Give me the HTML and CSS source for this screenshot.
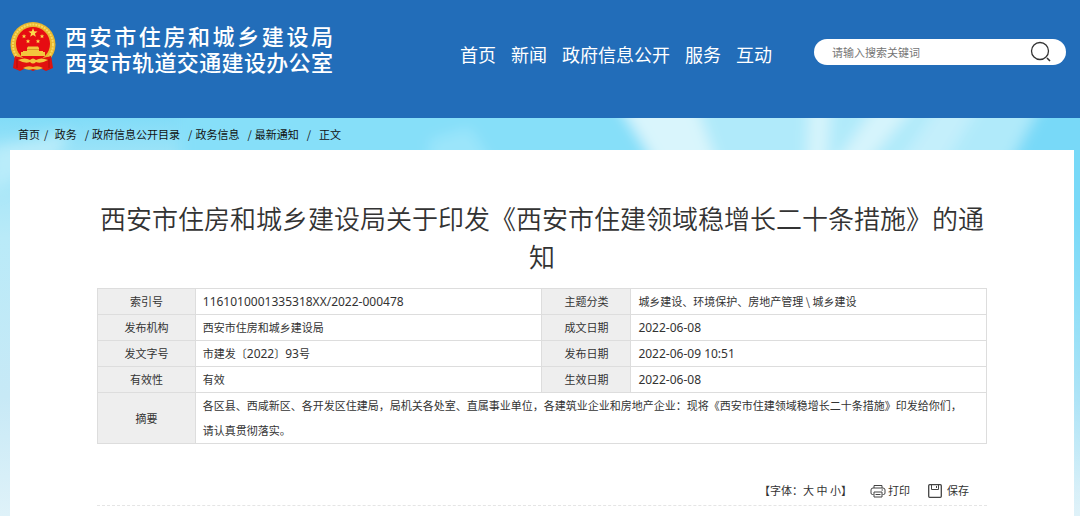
FILE: index.html
```html
<!DOCTYPE html>
<html lang="zh-CN">
<head>
    <meta charset="UTF-8">
    <title>西安市住房和城乡建设局</title>
    <meta name="viewport" content="width=device-width, initial-scale=1">
    <link rel="stylesheet" href="styles.css">
</head>
<body>
    <header class="header">
        <a class="logo" href="#">
            <svg class="logo-emblem" viewBox="0 0 46 50" aria-hidden="true">
                <path d="M5 33 L3 46 L10 49 L16 46 L23 49 L30 46 L36 49 L43 46 L41 33 Z" fill="#d8140f"/>
                <circle cx="23" cy="22.500" r="22.500" fill="#e9b62e"/>
                <circle cx="23" cy="22.500" r="20" fill="none" stroke="#f8da62" stroke-width="2" stroke-dasharray="2 1"/>
                <circle cx="23" cy="22" r="17" fill="#e60c12"/>
                <path d="M23 6 L24.2 9.3 L27.6 9.4 L24.9 11.5 L25.9 14.8 L23 12.9 L20.1 14.8 L21.1 11.5 L18.4 9.4 L21.8 9.3 Z" fill="#fbd84c"/>
                <path d="M14 12 l.6 1.5 1.7.1 -1.3 1 .4 1.6 -1.4-.9 -1.4.9 .4-1.6 -1.3-1 1.7-.1Z M18 17 l.6 1.5 1.7.1 -1.3 1 .4 1.6 -1.4-.9 -1.4.9 .4-1.6 -1.3-1 1.7-.1Z M28 17 l.6 1.5 1.7.1 -1.3 1 .4 1.6 -1.4-.9 -1.4.9 .4-1.6 -1.3-1 1.7-.1Z M32 12 l.6 1.5 1.7.1 -1.3 1 .4 1.6 -1.4-.9 -1.4.9 .4-1.6 -1.3-1 1.7-.1Z" fill="#fbd84c"/>
                <path d="M17 26 L18 24.5 H28 L29 26 V29 H33 V30 H35 V34 H11 V30 H13 V29 H17 Z" fill="#f3c63d"/>
                <path d="M17 27.5 H29" stroke="#d79b22" stroke-width="1"/>
                <path d="M5 34 Q23 40 41 34 L41 46 L36 48 L30 45 L23 48 L16 45 L10 48 L5 46 Z" fill="#e1120f"/>
                <path d="M8 38 Q15 35 20 38 Q23 35 26 38 Q31 35 38 38 Q31 42 26 40 Q23 43 20 40 Q15 42 8 38 Z" fill="#f3c63d"/>
                <path d="M13 46 Q18 43 23 45 Q28 43 33 46 Q28 49 23 47 Q18 49 13 46 Z" fill="#f0b934"/>
                <path d="M7 37 V46 M39 37 V46" stroke="#a90e0c" stroke-width="1"/>
            </svg>
            <span class="logo-name">西安市住房和城乡建设局<br>西安市轨道交通建设办公室</span>
        </a>
        <nav class="nav">
            <a href="#">首页</a>
            <a href="#">新闻</a>
            <a href="#">政府信息公开</a>
            <a href="#">服务</a>
            <a href="#">互动</a>
        </nav>
        <form class="search">
            <input class="search-input" type="text" placeholder="请输入搜索关键词" aria-label="请输入搜索关键词">
            <button class="search-btn" type="button" aria-label="搜索">
                <svg width="22" height="22" viewBox="0 0 22 22" fill="none" stroke="#333" aria-hidden="true">
                    <circle cx="10" cy="10" r="8.500" stroke-width="1.300"/>
                    <path d="M17 17 L20 20" stroke-width="1.600"/>
                </svg>
            </button>
        </form>
    </header>

    <main class="main">
        <svg class="sky" viewBox="0 0 1080 398" preserveAspectRatio="none" aria-hidden="true">
            <defs>
                <linearGradient id="skyFill" x1="0" y1="0" x2="0" y2="1">
                    <stop offset="0" stop-color="#82dcf8"/>
                    <stop offset=".1" stop-color="#9fe4f8"/>
                    <stop offset=".3" stop-color="#b9eaf8"/>
                    <stop offset=".7" stop-color="#c7e9f6"/>
                    <stop offset="1" stop-color="#dff2f9"/>
                </linearGradient>
                <linearGradient id="skyEdge" x1="0" y1="0" x2="0" y2="1">
                    <stop offset="0" stop-color="#78d9f8"/>
                    <stop offset=".3" stop-color="#78d9f8"/>
                    <stop offset="1" stop-color="#78d9f8" stop-opacity="0"/>
                </linearGradient>
                <filter id="soft" x="-10%" y="-20%" width="120%" height="140%"><feGaussianBlur stdDeviation="7"/></filter>
            </defs>
            <rect width="1080" height="398" fill="url(#skyFill)"/>
            <g filter="url(#soft)">
                <path d="M180 -30 H620 L675 60 H180 Z" fill="#86dff9"/>
                <path d="M430 22 L470 10 L500 60 H430 Z" fill="#9be5fa"/>
                <path d="M615 -30 H1050 L1000 60 H660 Z" fill="#b0eafa"/>
                <path d="M608 -30 H690 L722 60 H665 Z" fill="#d9f5fc"/>
                <path d="M810 -30 H832 L826 60 H806 Z" fill="#d6f4fc"/>
                <path d="M888 -30 H930 L855 60 H825 Z" fill="#d6f4fc"/>
                <path d="M950 -30 H990 L935 60 H890 Z" fill="#c4effb"/>
                <path d="M1052 -30 H1110 V380 H1070 L1062 70 L1002 60 Z" fill="url(#skyEdge)"/>
                <path d="M-10 30 L70 15 L60 35 L-10 75 Z" fill="#b9ecfa"/>
            </g>
        </svg>
        <div class="crumbs">
            <a href="#">首页</a><span class="sep">/</span>
            <a href="#">政务</a><span class="sep sep-left">/</span><a href="#">政府信息公开目录</a><span class="sep sep-left">/</span><a href="#">政务信息</a><span class="sep sep-left">/</span><a href="#">最新通知</a><span class="sep sep-both">/</span><span>正文</span>
        </div>

        <article class="panel">
            <h1 class="title">西安市住房和城乡建设局关于印发《西安市住建领域稳增长二十条措施》的通知</h1>
            <table class="info">
                <colgroup>
                    <col class="col-label">
                    <col class="col-value">
                    <col class="col-label2">
                    <col>
                </colgroup>
                <tr>
                    <th scope="row">索引号</th>
                    <td class="num">1161010001335318XX/2022-000478</td>
                    <th scope="row">主题分类</th>
                    <td>城乡建设、环境保护、房地产管理 \ 城乡建设</td>
                </tr>
                <tr>
                    <th scope="row">发布机构</th>
                    <td>西安市住房和城乡建设局</td>
                    <th scope="row">成文日期</th>
                    <td class="num">2022-06-08</td>
                </tr>
                <tr>
                    <th scope="row">发文字号</th>
                    <td>市建发〔<span class="num">2022</span>〕<span class="num">93</span>号</td>
                    <th scope="row">发布日期</th>
                    <td class="num">2022-06-09 10:51</td>
                </tr>
                <tr>
                    <th scope="row">有效性</th>
                    <td>有效</td>
                    <th scope="row">生效日期</th>
                    <td class="num">2022-06-08</td>
                </tr>
                <tr>
                    <th scope="row">摘要</th>
                    <td class="summary" colspan="3">各区县、西咸新区、各开发区住建局，局机关各处室、直属事业单位，各建筑业企业和房地产企业：现将《西安市住建领域稳增长二十条措施》印发给你们，请认真贯彻落实。</td>
                </tr>
            </table>

            <div class="tools">
                <span class="font-size">【字体：<button type="button">大</button> <button type="button">中</button> <button type="button">小</button>】</span>
                <button class="tool" type="button">
                    <svg width="16" height="14" viewBox="0 0 16 14" fill="none" stroke="#444" aria-hidden="true">
                        <path d="M4 4 V1.500 H12 V4 M3.500 10.500 H2.500 Q1 10.500 1 9 V6 Q1 4 3 4 H13 Q15 4 15 6 V9 Q15 10.500 13.500 10.500 H12.500"/>
                        <path d="M4 8 H12 V13 H4 Z M5.500 10.500 H10.500 M11.500 6 H13"/>
                    </svg>
                    打印
                </button>
                <button class="tool tool-save" type="button">
                    <svg width="14" height="14" viewBox="0 0 14 14" fill="none" stroke="#444" aria-hidden="true">
                        <rect x=".700" y=".700" width="12.600" height="12.600" rx="1" stroke-width="1.300"/>
                        <path d="M3.500 1 V5.500 H10.500 V1 M8.500 2 V4"/>
                    </svg>
                    保存
                </button>
            </div>
        </article>
    </main>
</body>
</html>
```
FILE: styles.css
```css
* {box-sizing: border-box;}

body {
    margin: 0;
    min-height: 100vh;
    display: flex;
    flex-direction: column;
    font-family: "Noto Sans CJK SC", sans-serif;
    font-size: 11px;
    color: #333;
}
a {color: inherit; text-decoration: none;}
button {
    padding: 0;
    border: 0;
    background: none;
    font: inherit;
    color: inherit;
    cursor: pointer;
}

.header {
    display: flex;
    align-items: flex-start;
    height: 118px;
    padding: 22px 14px 0 10px;
    background-color: #226db9;
    color: white;
}
.logo {display: flex; align-items: flex-start; gap: 9px;}
.logo-emblem {width: 46px; height: 50px;}
.logo-name {
    width: 268px;
    font-size: 22px;
    font-weight: 500;
    line-height: 26px;
    text-align: justify;
    text-align-last: justify;
}

.nav {
    display: flex;
    gap: 15px;
    margin: 19px 0 0 127px;
    font-size: 18px;
    line-height: 27px;
    white-space: nowrap;
}

.search {
    display: flex;
    align-items: center;
    width: 252px;
    height: 26px;
    margin: 17px 0 0 auto;
    padding: 0 14px 0 18px;
    border-radius: 13px;
    background-color: white;
}
.search-input {
    flex: 1;
    min-width: 0;
    padding: 0;
    border: 0;
    outline: 0;
    background: none;
    font: inherit;
    color: #333;
}
.search-input::placeholder {color: #757575;}
.search-btn {display: flex;}

.main {
    position: relative;
    flex: 1;
    display: flex;
    flex-direction: column;
    padding: 0 6px 0 10px;
}
.sky {
    position: absolute;
    top: 0;
    left: 0;
    z-index: -1;
    width: 100%;
    height: 100%;
}

.crumbs {padding-left: 8px; line-height: 32px; color: #111;}
.sep {margin: 0 4px;}
.sep-left {margin: 0 3px 0 8px;}
.sep-both {margin: 0 8px;}

.panel {flex: 1; padding: 49px 87px 0; background-color: white;}
.title {
    margin: 0 0 13px;
    font-size: 26px;
    font-weight: 350;
    line-height: 38px;
    text-align: center;
}

.info {
    width: 100%;
    border-collapse: collapse;
    table-layout: fixed;
    line-height: 25px;
}
.info th, .info td {padding: 0 7px; border: 1px solid #ddd; text-align: left;}
.info th {background-color: #eee; font-weight: 400; text-align: center;}
.info .summary {padding-right: 16px;}
.col-label {width: 11%;}
.col-value {width: 39%;}
.col-label2 {width: 10%;}
.num {font-family: "Noto Sans", "Noto Sans CJK SC", sans-serif; font-size: 12px;}

.tools {
    display: flex;
    justify-content: flex-end;
    align-items: center;
    gap: 18px;
    margin-top: 32px;
    padding-right: 18px;
    border-bottom: 1px dashed #e5e5e5;
    line-height: 29px;
}
.tool {display: flex; align-items: center; gap: 2px;}
.tool-save {gap: 5px;}
```
